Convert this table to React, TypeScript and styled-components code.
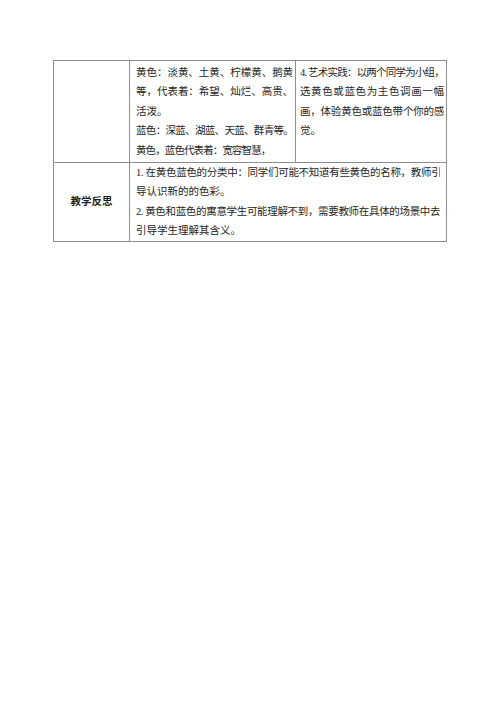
import React from 'react'
import styled, { createGlobalStyle } from 'styled-components'

const GlobalStyle = createGlobalStyle`
    html, body {
        margin: 0;
        padding: 0;
        background: #ffffff;
    }
    body {
        font-family: "Liberation Serif", "Noto Sans CJK SC", serif;
        color: #262626;
    }
`;

type LineData = { text: string; fill?: boolean; squeeze?: number };

const colorsText: LineData[] = [
    { text: '黄色：淡黄、土黄、柠檬黄、鹅黄', fill: true, squeeze: -0.1 },
    { text: '等，代表着：希望、灿烂、高贵、', fill: true, squeeze: -0.1 },
    { text: '活泼。' },
    { text: '蓝色：深蓝、湖蓝、天蓝、群青等。', fill: true, squeeze: -0.8 },
    { text: '黄色，蓝色代表着：宽容智慧，', squeeze: -0.9 },
];

const practiceText: LineData[] = [
    { text: '4. 艺术实践：以两个同学为小组，', fill: true, squeeze: -0.8 },
    { text: '选黄色或蓝色为主色调画一幅', fill: true },
    { text: '画，体验黄色或蓝色带个你的感', fill: true, squeeze: -0.3 },
    { text: '觉。' },
];

const reflectText: LineData[] = [
    { text: '1. 在黄色蓝色的分类中：同学们可能不知道有些黄色的名称，教师引', fill: true, squeeze: -0.3 },
    { text: '导认识新的的色彩。' },
    { text: '2. 黄色和蓝色的寓意学生可能理解不到，需要教师在具体的场景中去', fill: true, squeeze: -0.5 },
    { text: '引导学生理解其含义。' },
];

const renderLines = (lines: LineData[]) =>
    lines.map((l, i) => (
        <Line key={i} $fill={l.fill} $squeeze={l.squeeze}>{l.text}</Line>
    ));

const App = () => {
    return (
        <>
            <GlobalStyle />
            <Page>
                <Table>
                    <Cell />
                    <Cell $pl={6} $pr={2} $py={1.5}>{renderLines(colorsText)}</Cell>
                    <Cell $pl={4} $pr={2} $py={1.5}>{renderLines(practiceText)}</Cell>
                    <HeadCell>教学反思</HeadCell>
                    <Cell $pl={6} $pr={6} $span={2}>{renderLines(reflectText)}</Cell>
                </Table>
            </Page>
        </>
    )
}

const Page = styled.div`
    width: 500px;
    min-height: 707px;
    padding: 60px 0 0 53px;
    box-sizing: border-box;
    background: #ffffff;
`;

const Table = styled.div`
    display: grid;
    grid-template-columns: 76px 166px 151px;
    width: 394px;
    box-sizing: border-box;
    border-top: 1px solid #8e8e8e;
    border-left: 1px solid #8e8e8e;
`;

const Cell = styled.div<{ $pl?: number; $pr?: number; $py?: number; $span?: number }>`
    box-sizing: border-box;
    border-right: 1px solid #8e8e8e;
    border-bottom: 1px solid #8e8e8e;
    padding: ${({ $py = 0 }) => $py}px ${({ $pr = 0 }) => $pr}px ${({ $py = 0 }) => $py}px ${({ $pl = 0 }) => $pl}px;
    grid-column: span ${({ $span = 1 }) => $span};
    font-size: 10.5px;
    line-height: 19.5px;
    min-width: 0;
`;

const HeadCell = styled(Cell)`
    display: flex;
    align-items: center;
    justify-content: center;
    font-weight: bold;
    color: #1e1e1e;
    padding-top: 1px;
`;

const Line = styled.div<{ $fill?: boolean; $squeeze?: number }>`
    white-space: nowrap;
    text-align: ${({ $fill }) => ($fill ? 'justify' : 'left')};
    text-align-last: ${({ $fill }) => ($fill ? 'justify' : 'left')};
    text-justify: inter-character;
    letter-spacing: ${({ $squeeze = 0 }) => $squeeze}px;
    overflow: hidden;
`;

export default App;
